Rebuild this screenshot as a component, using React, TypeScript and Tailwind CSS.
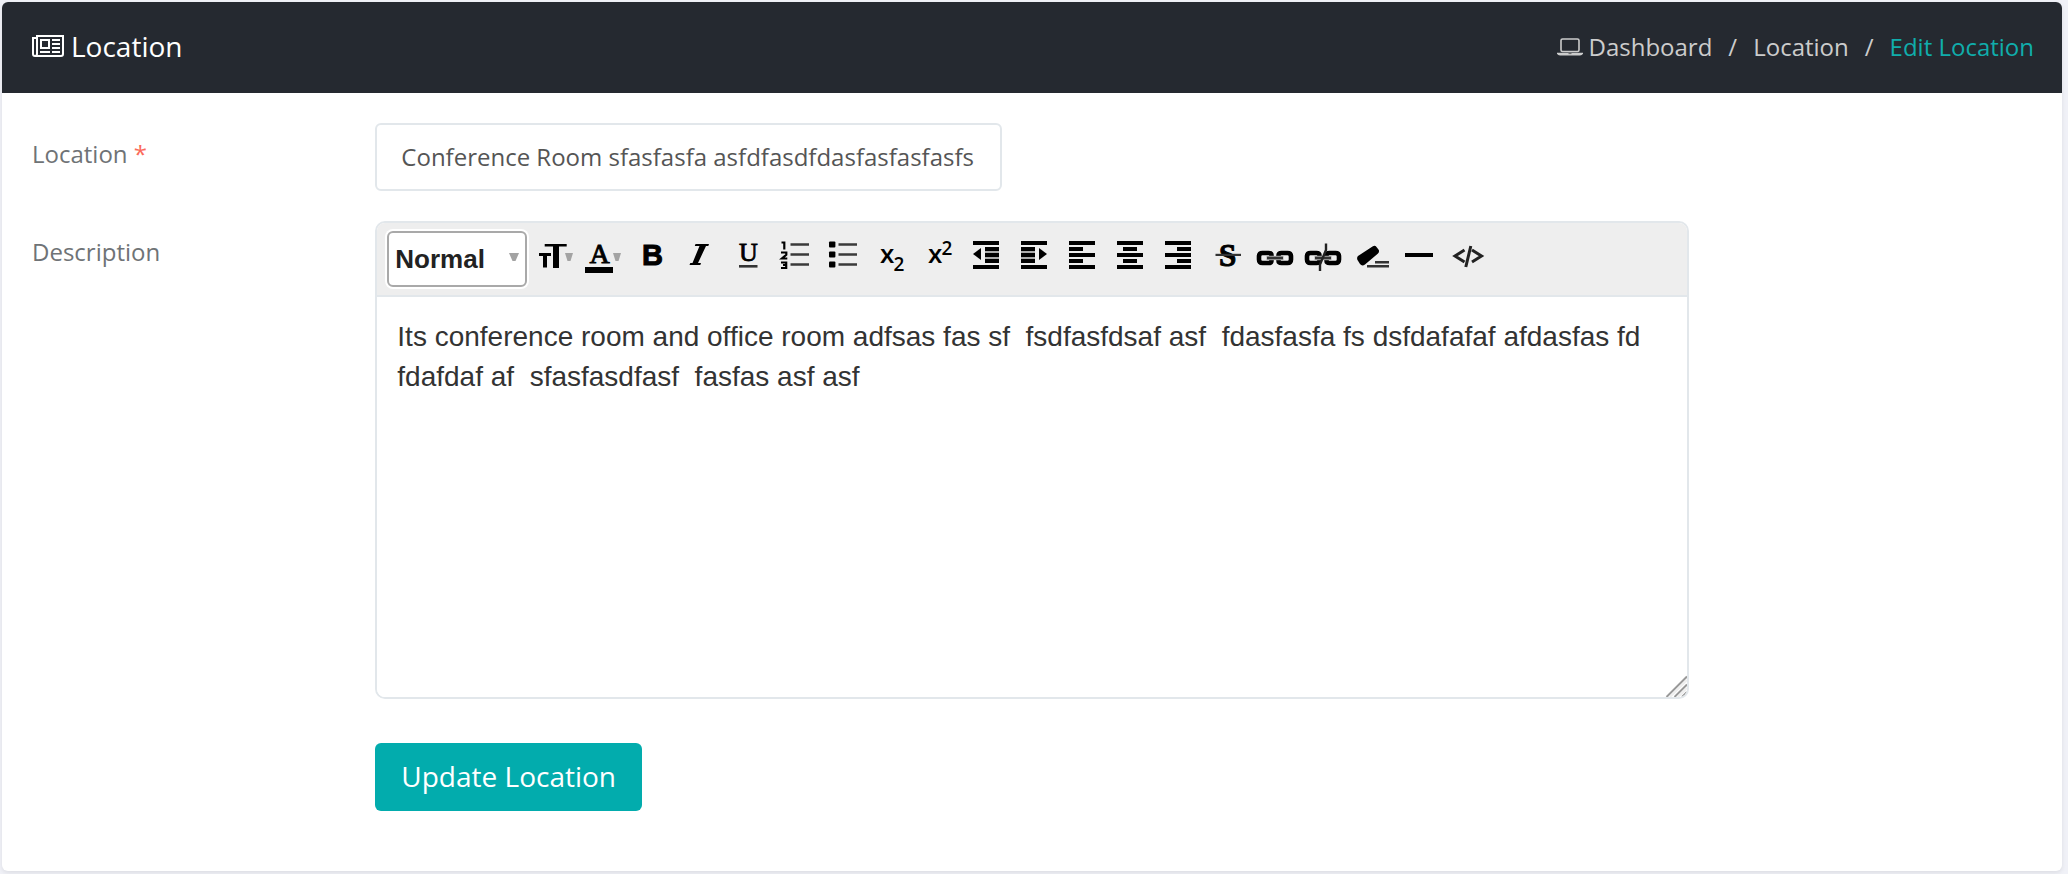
import { useState } from "react";
import type { ReactNode } from "react";

function NewspaperIcon() {
  return (
    <svg width="32" height="22" viewBox="0 0 32 22" fill="none" stroke="currentColor" strokeWidth="2" aria-hidden="true">
      <path d="M5 1H31V19Q31 21 29 21H3Q5 21 5 19Z" />
      <path d="M5 3H1V19Q1 21 3 21" />
      <path d="M9 5H17V13H9Z" />
      <path d="M20 5H28M20 9H28M20 13H28M8 17H18M20 17H28" />
    </svg>
  );
}

function LaptopIcon() {
  return (
    <svg width="26" height="18" viewBox="0 0 26 18" aria-hidden="true">
      <rect x="4" y="1" width="18" height="12.5" rx="1.6" fill="none" stroke="currentColor" strokeWidth="1.6" />
      <path d="M0 14.8H26V15.8Q25 17.4 23 17.4H3Q1 17.4 0 15.8Z" fill="currentColor" />
      <path d="M11.5 15.6H14.5" stroke="#666" strokeWidth="1" />
    </svg>
  );
}

const fullBars = (rows: number[]) => rows.map((y) => <rect key={y} x="9" y={y} width="26" height="4" />);
const shortBars = (x: number, rows: number[]) =>
  rows.map((y) => <rect key={y} x={x} y={y} width="14" height="4" />);

const caret = <path d="M33 22H41L38.5 30H35.5Z" fill="#a3a3a3" />;

const chain = (
  <>
    <path
      d="M19.5 25V24.5Q19.5 22 16.5 22H10.5Q7 22 7 25.5V28.5Q7 32 10.5 32H16.5Q19.5 32 19.5 29.5V29"
      fill="none"
      stroke="currentColor"
      strokeWidth="4.6"
    />
    <path
      d="M26.5 25V24.5Q26.5 22 29.5 22H35.5Q39 22 39 25.5V28.5Q39 32 35.5 32H29.5Q26.5 32 26.5 29.5V29"
      fill="none"
      stroke="currentColor"
      strokeWidth="4.6"
    />
    <rect x="14" y="24.8" width="18" height="4.4" fill="#ccc" />
    <rect x="15" y="25.6" width="16" height="2.8" fill="#333" />
  </>
);

const listLines = <path d="M18.5 13.5H37M18.5 23.5H37M18.5 33.5H37" stroke="#3a3a3a" strokeWidth="2.4" />;

const sans = "font-[Liberation_Sans,sans-serif]";
const serif = "font-[Liberation_Serif,serif]";

const tools: { name: string; icon: ReactNode }[] = [
  {
    name: "Font size",
    icon: (
      <>
        <path d="M7 22H19V25H15V36.5H11V25H7Z" />
        <path d="M12.7 13H34.7V15.5H27V37H21V15.5H12.7Z" />
        {caret}
      </>
    ),
  },
  {
    name: "Text color",
    icon: (
      <>
        <text x="9.5" y="32" fontSize="28" stroke="currentColor" strokeWidth="0.9" className={serif}>A</text>
        <rect x="5" y="36" width="28" height="6" />
        {caret}
      </>
    ),
  },
  {
    name: "Bold",
    icon: <text x="14" y="34" fontSize="29" fontWeight="700" stroke="currentColor" strokeWidth="1" className={sans}>B</text>,
  },
  {
    name: "Italic",
    icon: <path d="M19.5 13H33L32.3 15H30L22 32H25L24.3 34H13.5L14.3 32H16.5L23.5 15H18.8Z" />,
  },
  {
    name: "Underline",
    icon: (
      <>
        <text x="15" y="30" fontSize="26" stroke="currentColor" strokeWidth="0.8" className={serif}>U</text>
        <rect x="15" y="34" width="18.5" height="2.6" fill="#333" />
      </>
    ),
  },
  {
    name: "Ordered list",
    icon: (
      <>
        <path
          d="M9.5 11.5H12.3V18.5M9 21.5H14.3V23.8L10 27.5H15.3M9 31.5H14.2V37H9M11 34H14"
          fill="none"
          stroke="currentColor"
          strokeWidth="2.2"
        />
        {listLines}
      </>
    ),
  },
  {
    name: "Unordered list",
    icon: (
      <>
        <rect x="9" y="10.5" width="6.4" height="6" rx="1" />
        <rect x="9" y="20.5" width="6.4" height="6" rx="1" />
        <rect x="9" y="30.5" width="6.4" height="6" rx="1" />
        {listLines}
      </>
    ),
  },
  {
    name: "Subscript",
    icon: (
      <g className="font-[Open_Sans,sans-serif]" fontWeight="600">
        <text x="12" y="32" fontSize="26">x</text>
        <text x="25.5" y="40" fontSize="19">2</text>
      </g>
    ),
  },
  {
    name: "Superscript",
    icon: (
      <g className="font-[Open_Sans,sans-serif]" fontWeight="600">
        <text x="12" y="32" fontSize="26">x</text>
        <text x="25.5" y="24" fontSize="19">2</text>
      </g>
    ),
  },
  {
    name: "Outdent",
    icon: (
      <>
        <rect x="21" y="16" width="14" height="16" fill="#aaa" />
        {fullBars([10, 34])}
        {shortBars(21, [16, 22, 28])}
        <path d="M9 23L17 17V29Z" />
      </>
    ),
  },
  {
    name: "Indent",
    icon: (
      <>
        <rect x="9" y="16" width="14" height="16" fill="#aaa" />
        {fullBars([10, 34])}
        {shortBars(9, [16, 22, 28])}
        <path d="M35 23L27 17V29Z" />
      </>
    ),
  },
  { name: "Align left", icon: <>{fullBars([10, 22, 34])}{shortBars(9, [16, 28])}</> },
  { name: "Align center", icon: <>{fullBars([10, 22, 34])}{shortBars(15, [16, 28])}</> },
  { name: "Align right", icon: <>{fullBars([10, 22, 34])}{shortBars(21, [16, 28])}</> },
  {
    name: "Strikethrough",
    icon: (
      <>
        <text x="15" y="35" fontSize="31" fontWeight="700" stroke="currentColor" strokeWidth="1" className={serif}>S</text>
        <rect x="11.5" y="22.8" width="25.5" height="2.2" fill="#333" />
      </>
    ),
  },
  { name: "Insert link", icon: chain },
  {
    name: "Remove link",
    icon: (
      <>
        {chain}
        <path d="M26 12.5V19L20 33.5V40" fill="none" stroke="#222" strokeWidth="2.4" />
      </>
    ),
  },
  {
    name: "Clear formatting",
    icon: (
      <>
        <path d="M10 25L24.5 15.5Q27 14 28.5 16L30.8 19Q31.5 21 30 22.5L17 33.5Q14 35.5 12 33L9.5 29Q8.5 26.5 10 25Z" />
        <path d="M27 31.2H41M19 35.2H41" stroke="#333" strokeWidth="2.4" />
      </>
    ),
  },
  { name: "Horizontal rule", icon: <rect x="9" y="22" width="28" height="4" /> },
  {
    name: "View source",
    icon: (
      <path d="M20.5 19L11 25L20.5 31M28 19L37.5 25L28 31M26.8 15L21.8 36" fill="none" stroke="#222" strokeWidth="3" />
    ),
  },
];

function Toolbar() {
  return (
    <div className="flex flex-wrap items-start border-b-2 border-[#e2e7eb] bg-[#eee] px-2 py-1.5">
      <div className="relative mr-[3px] rounded-lg bg-white p-0.5">
        <select
          aria-label="Text style"
          className="block h-14 w-[140px] appearance-none rounded-md border-2 border-[#a9a9a9] bg-white pl-1.5 font-[Liberation_Sans,sans-serif] text-[26px] font-bold text-[#222]"
        >
          <option>Normal</option>
          <option>Heading</option>
        </select>
        <svg width="10" height="9" viewBox="0 0 10 9" className="pointer-events-none absolute top-6 right-2.5" aria-hidden="true">
          <path d="M0 0H10L6.5 8H3.5Z" fill="#a3a3a3" />
        </svg>
      </div>
      {tools.map((tool) => (
        <button key={tool.name} type="button" aria-label={tool.name} className="mt-0.5 size-12 text-black">
          <svg width="48" height="48" viewBox="0 0 48 48" fill="currentColor" aria-hidden="true">
            {tool.icon}
          </svg>
        </button>
      ))}
    </div>
  );
}

export default function App() {
  const [location, setLocation] = useState("Conference Room sfasfasfa asfdfasdfdasfasfasfasfs");
  const [description, setDescription] = useState(
    "Its conference room and office room adfsas fas sf  fsdfasfdsaf asf  fdasfasfa fs dsfdafafaf afdasfas fd fdafdaf af  sfasfasdfasf  fasfas asf asf",
  );

  return (
    <div className="min-h-screen bg-[#f0f1f7] pt-0.5 pr-1.5 pb-[3px] pl-0.5 font-[Open_Sans,sans-serif] text-2xl text-[#6f7376]">
      <main className="overflow-hidden rounded-md bg-white shadow-[0_2px_4px_rgba(0,0,0,0.08)]">
        <header className="flex h-[91px] items-center justify-between bg-[#252930] pr-7 pb-0.5 pl-[30px]">
          <h1 className="flex items-center gap-[7px] text-[28px] text-white">
            <NewspaperIcon />
            Location
          </h1>
          <nav aria-label="Breadcrumb">
            <ol className="flex items-center gap-4 text-[#ccc]">
              <li>
                <a href="#dashboard" className="flex items-center gap-1.5">
                  <LaptopIcon />
                  Dashboard
                </a>
              </li>
              <li aria-hidden="true">/</li>
              <li>
                <a href="#location">Location</a>
              </li>
              <li aria-hidden="true">/</li>
              <li aria-current="page" className="text-[#10adab]">
                Edit Location
              </li>
            </ol>
          </nav>
        </header>

        <form className="grid grid-cols-12 pt-[30px] pb-[60px]" onSubmit={(event) => event.preventDefault()}>
          <div className="col-span-2 px-[30px] pt-[15px]">
            <label htmlFor="location">
              Location <span className="text-[#fb6b5b]">*</span>
            </label>
          </div>
          <div className="col-span-4 px-[30px]">
            <input
              id="location"
              type="text"
              required
              value={location}
              onChange={(event) => setLocation(event.target.value)}
              className="block h-[68px] w-full rounded-md border-2 border-[#e2e7eb] bg-white px-6 pb-0.5 text-[#555]"
            />
          </div>

          <div className="col-span-2 col-start-1 mt-[30px] px-[30px] pt-[15px]">
            <label htmlFor="description">Description</label>
          </div>
          <div className="col-span-8 mt-[30px] px-[30px]">
            <div className="relative overflow-hidden rounded-[10px] border-2 border-[#e2e7eb]">
              <Toolbar />
              <textarea
                id="description"
                value={description}
                onChange={(event) => setDescription(event.target.value)}
                className="block h-[400px] w-full resize-none bg-white p-5 font-[Liberation_Sans,sans-serif] text-[28px] leading-10 text-[#333]"
              />
              <svg width="22" height="22" viewBox="0 0 22 22" className="pointer-events-none absolute right-0 bottom-0" aria-hidden="true">
                <path d="M1.5 22L22 1.5M9.5 22L22 9.5M17 22L22 17" stroke="#999" strokeWidth="2" />
                <path d="M5 22L22 5M13 22L22 13" stroke="#eee" strokeWidth="2" />
              </svg>
            </div>
          </div>

          <div className="col-span-8 col-start-3 mt-11 px-[30px]">
            <button type="submit" className="h-[68px] rounded-md bg-[#02acad] px-[26px] text-[28px] text-white">
              Update Location
            </button>
          </div>
        </form>
      </main>
    </div>
  );
}
